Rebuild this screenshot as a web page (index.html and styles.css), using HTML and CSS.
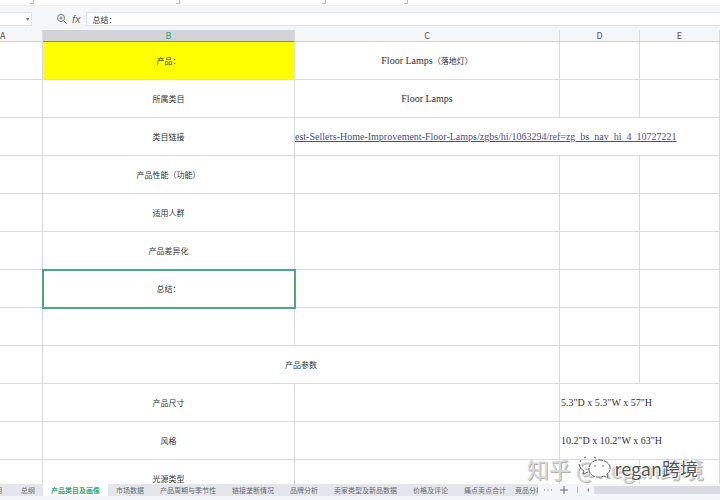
FILE: index.html
```html
<!DOCTYPE html>
<html lang="zh-CN">
<head>
  <title>产品类目及画像</title>
  <meta charset="UTF-8">
  <link rel="stylesheet" href="styles.css">
</head>
<body>
  <div class="ribbon">
    <div class="group short"></div>
    <div class="group long"></div>
    <div class="group long"></div>
    <div class="group"></div>
  </div>

  <div class="formula-bar">
    <button class="name-box" aria-label="名称框">▾</button>
    <button class="tool" aria-label="查找">
      <svg width="10" height="10" viewBox="0 0 10 10" fill="none" stroke="#74797d">
        <circle cx="4" cy="4" r="3.5"/>
        <path d="M6.5 6.5 L9.6 9.6 M2.5 4 H5.5 M4 2.5 V5.5"/>
      </svg>
    </button>
    <button class="tool fx" aria-label="插入函数">fx</button>
    <input class="formula" type="text" value="总结：" aria-label="编辑栏">
  </div>

  <main class="sheet">
    <table class="grid">
      <colgroup>
        <col class="col-a"><col class="col-b"><col class="col-c"><col class="col-d"><col class="col-e">
      </colgroup>
      <thead>
        <tr><th class="a">A</th><th class="active">B</th><th>C</th><th>D</th><th>E</th></tr>
      </thead>
      <tbody>
        <tr><td></td><td class="yellow">产品：</td><td><span class="latin">Floor Lamps</span>（落地灯）</td><td></td><td></td></tr>
        <tr><td></td><td>所属类目</td><td><span class="latin">Floor Lamps</span></td><td></td><td></td></tr>
        <tr><td></td><td>类目链接</td><td class="link" colspan="3"><a class="latin" href="#">est-Sellers-Home-Improvement-Floor-Lamps/zgbs/hi/1063294/ref=zg_bs_nav_hi_4_10727221</a></td></tr>
        <tr><td></td><td>产品性能（功能）</td><td></td><td></td><td></td></tr>
        <tr><td></td><td>适用人群</td><td></td><td></td><td></td></tr>
        <tr><td></td><td>产品差异化</td><td></td><td></td><td></td></tr>
        <tr><td></td><td class="selected">总结：</td><td></td><td></td><td></td></tr>
        <tr><td></td><td></td><td></td><td></td><td></td></tr>
        <tr><td></td><td colspan="2">产品参数</td><td></td><td></td></tr>
        <tr><td></td><td>产品尺寸</td><td></td><td class="size" colspan="2"><span class="latin">5.3"D x 5.3"W x 57"H</span></td></tr>
        <tr><td></td><td>风格</td><td></td><td class="size" colspan="2"><span class="latin">10.2"D x 10.2"W x 63"H</span></td></tr>
        <tr><td></td><td>光源类型</td><td></td><td></td><td></td></tr>
      </tbody>
    </table>
  </main>

  <footer class="tabs">
    <button class="tab first">明</button>
    <button class="tab">总纲</button>
    <button class="tab current">产品类目及画像</button>
    <button class="tab">市场数据</button>
    <button class="tab">产品周期与季节性</button>
    <button class="tab">链接垄断情况</button>
    <button class="tab">品牌分析</button>
    <button class="tab">卖家类型及新品数据</button>
    <button class="tab">价格及评论</button>
    <button class="tab">痛点卖点合计</button>
    <button class="tab cut">竞品分析</button>
    <div class="tab-tools">
      <button aria-label="更多">
        <svg width="8" height="8" viewBox="0 0 8 8" fill="#666b70"><path d="M0 3.5h1v1h-1z M3.5 3.5h1v1h-1z M7 3.5h1v1h-1z"/></svg>
      </button>
      <button aria-label="新建">
        <svg width="8" height="8" viewBox="0 0 8 8" stroke="#666b70"><path d="M0 4h8 M4 0v8"/></svg>
      </button>
      <span class="divider"></span>
      <button aria-label="向左">
        <svg width="4" height="6" viewBox="0 0 4 6" fill="#888d92"><path d="M3 1v4L1 3z"/></svg>
      </button>
    </div>
    <div class="scrollbar"></div>
  </footer>

  <div class="watermark">
    <span class="zhihu">知乎 @Regan跨境</span>
    <div class="wechat">
      <svg width="36" height="26" viewBox="0 0 36 26" fill="none" stroke="#666">
        <path d="M3 9 C4 13 6 15 8 16 L7 19 L12 17" fill="#fff"/>
        <path d="M8 3 L10 2 M18 2 L20 3 M4 7 L5 5" />
        <path d="M31 19 L32 23 L28 21 C21 24 13 21 13 14 C13 8 18 5 23 5 C30 5 34 9 34 13 C34 16 33 18 31 19 Z" fill="#fff" stroke-dasharray="5 1"/>
        <path d="M18 11 h2 M26 11 h2"/>
      </svg>
      <span>regan跨境</span>
    </div>
  </div>
</body>
</html>
```
FILE: styles.css
```css
* {
  box-sizing: border-box;
}

body {
  margin: 0;
  height: 100vh;
  display: flex;
  flex-direction: column;
  position: relative;
  overflow: hidden;
  font-family: "Liberation Serif", "Noto Sans CJK SC", serif;
  font-size: 8px;
  color: #333;
  background: #fff;
}

button {
  padding: 0;
  border: none;
  background: none;
  font-family: "Noto Sans CJK SC", sans-serif;
  color: #666b70;
}

svg {
  display: block;
}

.ribbon {
  display: flex;
  flex: none;
  height: 6px;
  border-bottom: 1px solid #eef0f2;
}

.group {
  display: flex;
  width: 82px;
  justify-content: flex-end;
}

.group::after {
  content: "";
  width: 3px;
  height: 3px;
  border-right: 1px solid #b9bcc0;
  border-bottom: 1px solid #b9bcc0;
}

.group.short {
  width: 34px;
}

.group.long {
  width: 146px;
}

.formula-bar {
  display: flex;
  flex: none;
  height: 24px;
  padding-top: 6px;
  align-items: flex-start;
  background: #f4f6f7;
}

.name-box {
  width: 32px;
  height: 14px;
  padding-right: 2px;
  border: 1px solid #e0e3e5;
  border-left: none;
  background: #fff;
  font-size: 6px;
  line-height: 12px;
  text-align: right;
}

.tool {
  margin: 2px 0 0 25px;
}

.tool.fx {
  margin: 0 5px;
  font: italic 11px/14px "Liberation Sans", sans-serif;
}

.formula {
  flex: 1;
  min-width: 0;
  height: 14px;
  padding: 0 6px;
  border: 1px solid #e0e3e5;
  border-right: none;
  outline: none;
  background: #fff;
  font-family: "Noto Sans CJK SC", sans-serif;
  font-size: 8px;
  color: #333;
}

.sheet {
  flex: 1;
  min-height: 0;
  overflow: hidden;
}

.grid {
  width: 100%;
  table-layout: fixed;
  border-collapse: separate;
  border-spacing: 0;
}

.col-a {
  width: 43px;
}

.col-b {
  width: 252px;
}

.col-c {
  width: 265px;
}

.col-d {
  width: 80px;
}

th {
  height: 12px;
  padding: 0;
  border-right: 1px solid #d9dbdd;
  border-bottom: 1px solid #cfd2d4;
  background: #f4f6f7;
  font: 9px/11px "Noto Sans CJK SC", sans-serif;
  color: #555;
}

th.a {
  text-align: left;
}

th.active {
  border-bottom-color: #4fa06c;
  background: #d2d4d8;
  color: #35a77c;
}

td {
  height: 38px;
  padding: 2px 0 0;
  border-right: 1px solid #dadada;
  border-bottom: 1px solid #dadada;
  line-height: 12px;
  text-align: center;
  white-space: nowrap;
}

.latin {
  font-size: 10px;
}

.yellow {
  background: #ff0;
}

.selected {
  outline: 2px solid #48a982;
  outline-offset: -1px;
}

.link {
  overflow: hidden;
  text-align: left;
}

.link a {
  color: #4c4c8e;
}

.size {
  padding-left: 1px;
  text-align: left;
}

.tabs {
  display: flex;
  flex: none;
  height: 16px;
  padding-bottom: 4px;
  background: #f3f5fa;
}

.tab {
  flex: none;
  padding: 0 8px;
  background: #e4e6eb;
  font-size: 7px;
  line-height: 12px;
  white-space: nowrap;
}

.tab.first {
  width: 13px;
  padding: 0;
  overflow: hidden;
  text-align: left;
  text-indent: -5px;
}

.tab.current {
  background: #fff;
  font-weight: bold;
  color: #35a77c;
}

.tab.cut {
  width: 24px;
  padding: 0 1px;
  overflow: hidden;
  text-align: left;
}

.tab-tools {
  display: flex;
  flex: 0 0 56px;
  padding: 0 4px 0 6px;
  justify-content: space-between;
  align-items: center;
}

.divider {
  width: 1px;
  height: 6px;
  background: #b5b8bd;
}

.scrollbar {
  flex: 1;
  height: 8px;
  margin-top: 2px;
  background: #d9dbe1;
}

/* overlaid on the lower right of the sheet */
.watermark {
  position: absolute;
  right: 16px;
  bottom: 16px;
  display: grid;
  align-items: center;
  font-family: "Noto Sans CJK SC", sans-serif;
  line-height: 32px;
  white-space: nowrap;
}

.zhihu,
.wechat {
  grid-area: 1 / 1;
}

.zhihu {
  font-size: 22px;
  color: #d8d8d8;
  text-shadow: 1px 1px 0 #b4b4b4;
}

.wechat {
  display: flex;
  padding-right: 6px;
  gap: 2px;
  justify-content: flex-end;
  align-items: center;
  font-size: 18px;
  color: #555;
  text-shadow: 1px 1px 0 #fff, -1px -1px 0 #fff;
}
```
